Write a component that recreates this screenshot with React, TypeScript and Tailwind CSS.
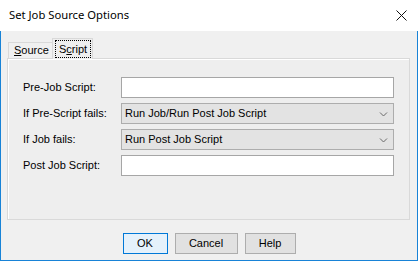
import React from "react";

const font = { fontFamily: '"Liberation Sans", Arial, sans-serif' };

function Chevron() {
  return (
    <svg width="9" height="6" viewBox="0 0 9 6" className="shrink-0">
      <path d="M1 1.5 L4.5 5 L8 1.5" fill="none" stroke="#6a6a6a" strokeWidth="1" />
    </svg>
  );
}

function TextBox() {
  return <div className="h-[21px] w-[273px] border border-[#a6a6a6] bg-white" />;
}

function Combo({ value }: { value: string }) {
  return (
    <div className="flex h-[21px] w-[273px] items-center justify-between border border-[#adadad] bg-[#e3e3e3] pl-[3px] pr-[5px] text-[11px] text-black">
      <span>{value}</span>
      <Chevron />
    </div>
  );
}

export default function App() {
  return (
    <div className="flex h-[261px] w-[418px] flex-col bg-white text-black" style={font}>
      {/* title bar */}
      <div className="flex h-[31px] shrink-0 items-center justify-between bg-white pl-[9px] pr-[11px]">
        <span className="text-[11.25px]" style={{ fontFamily: '"Noto Sans", "Open Sans", sans-serif' }}>
          Set Job Source Options
        </span>
        <svg width="11" height="11" viewBox="0 0 11 11">
          <path d="M0.5 0.5 L10.5 10.5 M10.5 0.5 L0.5 10.5" stroke="#111" strokeWidth="1" />
        </svg>
      </div>
      {/* body */}
      <div className="flex flex-1 flex-col border-x border-b border-[#1883d7] bg-[#f0f0f0] pl-[6px] pr-[7px] pt-[7px]">
        {/* tabs */}
        <div className="flex items-end pl-px text-[11px]">
          <div className="flex h-[16px] w-[44px] items-center border-l border-t border-[#d9d9d9] bg-[#f0f0f0] pl-[5px]">
            <span>
              <span className="underline underline-offset-1">S</span>ource
            </span>
          </div>
          <div className="relative z-10 -mb-px flex h-[21px] w-[41px] items-start border-x border-t border-[#d9d9d9] bg-[#eeeeee] pl-[2px] pt-px">
            <span className="border border-dotted border-black px-[3px] leading-[16px]">
              S<span className="underline underline-offset-1">c</span>ript
            </span>
          </div>
        </div>
        {/* panel */}
        <div className="h-[162px] w-[403px] border border-[#d9d9d9] bg-[#eeeeee] pl-[15px] pt-[18px] shadow-[inset_1px_1px_0_#ffffff]">
          <div className="grid grid-cols-[98px_273px] items-center gap-y-[5px] text-[11px]">
            <span>Pre-Job Script:</span>
            <TextBox />
            <span>If Pre-Script fails:</span>
            <Combo value="Run Job/Run Post Job Script" />
            <span>If Job fails:</span>
            <Combo value="Run Post Job Script" />
            <span>Post Job Script:</span>
            <TextBox />
          </div>
        </div>
        {/* buttons */}
        <div className="mt-[13px] flex justify-center gap-[7px] pl-px text-[11px]">
          <button className="flex h-[21px] w-[45px] items-center justify-center border border-[#0078d7] bg-[#e5f1fb]">
            OK
          </button>
          <button className="flex h-[21px] w-[63px] items-center justify-center border border-[#adadad] bg-[#e1e1e1]">
            Cancel
          </button>
          <button className="flex h-[21px] w-[51px] items-center justify-center border border-[#adadad] bg-[#e1e1e1]">
            Help
          </button>
        </div>
      </div>
    </div>
  );
}
